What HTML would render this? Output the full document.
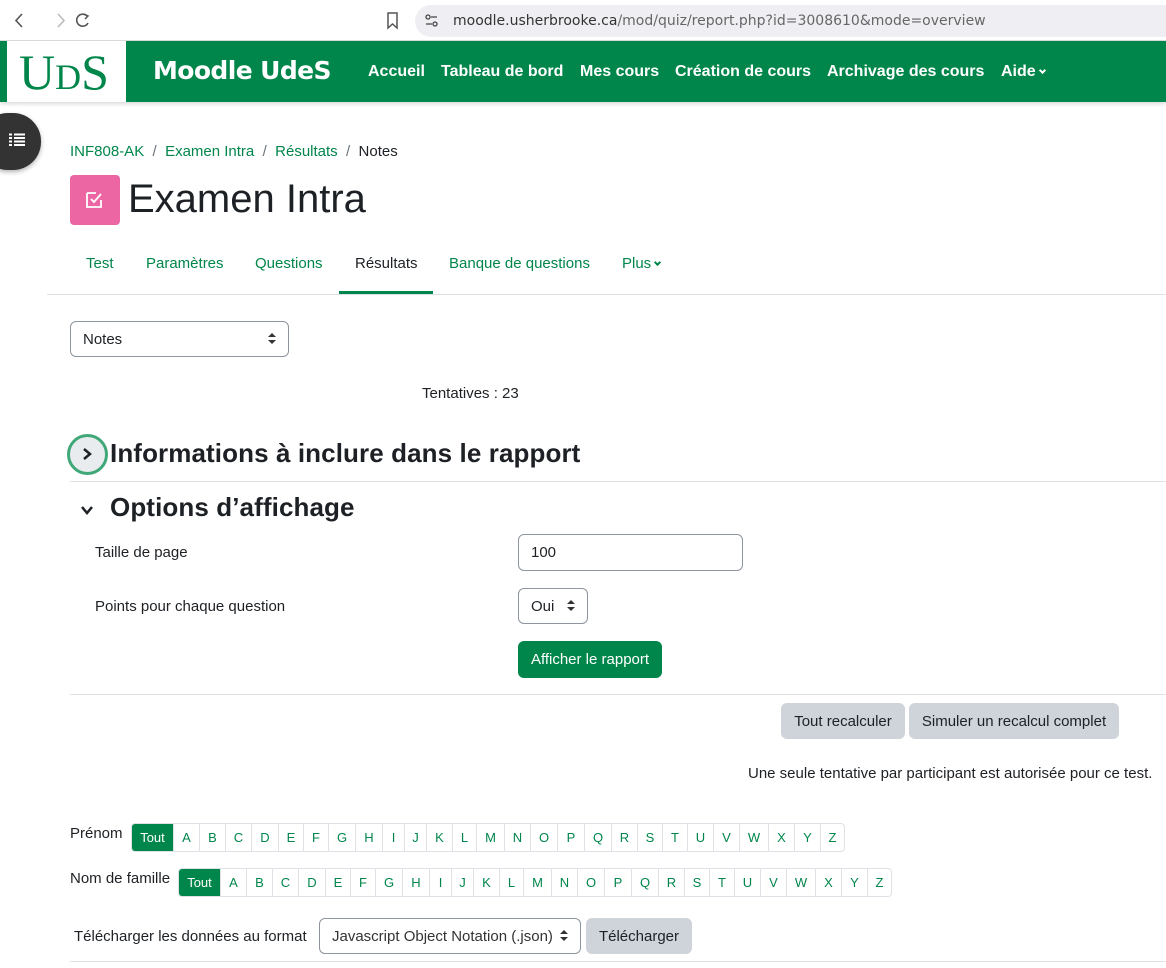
<!DOCTYPE html>
<html><head><meta charset="utf-8"><style>
*{box-sizing:border-box;margin:0;padding:0}
body{width:1166px;height:968px;overflow:hidden;background:#fff;font-family:"Liberation Sans",sans-serif;color:#1d2125;position:relative;font-size:15px}
.a{position:absolute;white-space:nowrap}
.g{color:#00864a}
.nav{position:absolute;left:0;top:41px;width:1166px;height:61px;background:#00864a;box-shadow:0 2px 4px rgba(0,0,0,.15)}
.nav .l{position:absolute;top:22px;color:#fff;font-weight:bold;font-size:16px}
.sel{position:absolute;border:1px solid #8f959e;border-radius:6px;background:#fff;font-size:15px;color:#1d2125;padding-left:12px;display:flex;align-items:center}
.sel:after{content:"";position:absolute;right:12px;top:50%;margin-top:-6px;border-left:4px solid transparent;border-right:4px solid transparent;border-bottom:4px solid #333}
.sel:before{content:"";position:absolute;right:12px;top:50%;margin-top:1px;border-left:4px solid transparent;border-right:4px solid transparent;border-top:4px solid #333}
.n:before,.n:after{display:none}
.btn{position:absolute;border-radius:6px;font-size:15px;display:flex;align-items:center;justify-content:center}
.bar{position:absolute;display:flex;border:1px solid #dee2e6;border-radius:4px;height:29px;font-size:13px}
.bar span{display:flex;align-items:center;justify-content:center;color:#00864a;border-left:1px solid #dee2e6;height:100%}
.bar span.t{background:#00864a;color:#fff;border:none;width:41px;border-radius:3px 0 0 3px}
.hr{position:absolute;height:1px;background:#dee2e6}
.chev{display:inline-block;width:6px;height:6px;border-right:2px solid currentColor;border-bottom:2px solid currentColor;transform:rotate(45deg);margin-left:4px;vertical-align:3px}
</style></head><body>
<div class="a" style="left:0;top:0;width:1166px;height:41px;background:#fff;border-bottom:1px solid #ddd"></div>
<svg class="a" style="left:12px;top:11px" width="80" height="20"><path d="M10 3 L4 9.5 L10 16" stroke="#555" stroke-width="1.6" fill="none"/><path d="M46 3 L52 9.5 L46 16" stroke="#bbb" stroke-width="1.6" fill="none"/><path d="M75 5 A6 6 0 1 0 76 12" stroke="#555" stroke-width="1.6" fill="none"/><path d="M72 3 L76 5 L73 8" stroke="#555" stroke-width="1.5" fill="none"/></svg>
<svg class="a" style="left:385px;top:11px" width="16" height="20"><path d="M3 2 H12 V17 L7.5 13 L3 17 Z" stroke="#555" stroke-width="1.5" fill="none"/></svg>
<div class="a" style="left:415px;top:5px;width:751px;height:32px;background:#efeff3;border-radius:16px 0 0 16px"></div>
<svg class="a" style="left:424px;top:13px" width="16" height="16"><circle cx="4" cy="4" r="2" stroke="#444" fill="none" stroke-width="1.3"/><path d="M7 4H13M2 11H8" stroke="#444" stroke-width="1.3"/><circle cx="11" cy="11" r="2" stroke="#444" fill="none" stroke-width="1.3"/></svg>
<div class="a" style="left:453px;top:13px;color:#333;font-family:'DejaVu Sans',sans-serif;font-size:14px">moodle.usherbrooke.ca<span style="color:#666">/mod/quiz/report.php?id=3008610&amp;mode=overview</span></div>
<div class="nav">
<div class="a" style="left:7px;top:0;width:119px;height:61px;background:#fff"></div>
<div class="a" style="left:19px;top:3px;font-family:'Liberation Serif',serif;font-size:50px;color:#00864a;line-height:56px">U<span style="font-size:36px">D</span>S</div>
<div class="a" style="left:153px;top:15px;color:#fff;font-weight:bold;font-size:25px;font-family:'DejaVu Sans',sans-serif;letter-spacing:-0.6px">Moodle UdeS</div>
<div class="l" style="left:368px">Accueil</div>
<div class="l" style="left:441px">Tableau de bord</div>
<div class="l" style="left:580px">Mes cours</div>
<div class="l" style="left:675px">Création de cours</div>
<div class="l" style="left:827px">Archivage des cours</div>
<div class="l" style="left:1001px">Aide<span class="chev" style="width:5px;height:5px"></span></div>
</div>
<div class="a" style="left:-20px;top:113px;width:61px;height:57px;border-radius:28px;background:#333;box-shadow:0 2px 5px rgba(0,0,0,.3)"></div>
<svg class="a" style="left:9px;top:133px" width="16" height="14"><path d="M0 1.5H3M5 1.5H16M0 5H3M5 5H16M0 8.5H3M5 8.5H16M0 12H3M5 12H16" stroke="#fff" stroke-width="2"/></svg>
<div class="a" style="left:70px;top:143px;font-size:15px"><span class="g">INF808-AK</span> <span style="color:#6a737b">&nbsp;/&nbsp;</span> <span class="g">Examen Intra</span> <span style="color:#6a737b">&nbsp;/&nbsp;</span> <span class="g">Résultats</span> <span style="color:#6a737b">&nbsp;/&nbsp;</span> Notes</div>
<div class="a" style="left:70px;top:175px;width:50px;height:50px;background:#eb66a2;border-radius:4px"></div>
<svg class="a" style="left:84px;top:189px" width="22" height="22"><path d="M3 4H12M3 4V18H17V11" stroke="#fff" stroke-width="1.8" fill="none"/><path d="M7 10L10 13L17 5" stroke="#fff" stroke-width="1.8" fill="none"/></svg>
<div class="a" style="left:128px;top:177px;font-size:40px">Examen Intra</div>
<div class="a" style="left:86px;top:255px;font-size:15px;color:#00864a">Test</div>
<div class="a" style="left:146px;top:255px;font-size:15px;color:#00864a">Paramètres</div>
<div class="a" style="left:255px;top:255px;font-size:15px;color:#00864a">Questions</div>
<div class="a" style="left:355px;top:255px;font-size:15px;color:#1d2125">Résultats</div>
<div class="a" style="left:449px;top:255px;font-size:15px;color:#00864a">Banque de questions</div>
<div class="a" style="left:622px;top:255px;font-size:15px;color:#00864a">Plus<span class="chev" style="width:5px;height:5px"></span></div>
<div class="hr" style="left:47px;top:294px;width:1119px"></div>
<div class="a" style="left:339px;top:291px;width:94px;height:3px;background:#00864a"></div>
<div class="sel" style="left:70px;top:321px;width:219px;height:36px">Notes</div>
<div class="a" style="left:422px;top:385px;font-size:15px">Tentatives : 23</div>
<div class="a" style="left:67px;top:434px;width:41px;height:41px;border-radius:50%;border:3px solid #40a878;background:#e9ecef"></div>
<svg class="a" style="left:80px;top:447px" width="14" height="14"><path d="M4 2L10 7L4 12" stroke="#1d2125" stroke-width="2.5" fill="none"/></svg>
<div class="a" style="left:110px;top:438px;font-size:26px;font-weight:bold;letter-spacing:0.1px">Informations à inclure dans le rapport</div>
<div class="hr" style="left:70px;top:481px;width:1096px"></div>
<svg class="a" style="left:80px;top:503px" width="14" height="14"><path d="M2 4L7 10L12 4" stroke="#1d2125" stroke-width="2.5" fill="none"/></svg>
<div class="a" style="left:110px;top:492px;font-size:26px;font-weight:bold;letter-spacing:0.1px">Options d’affichage</div>
<div class="a" style="left:95px;top:544px">Taille de page</div>
<div class="sel n" style="left:518px;top:534px;width:225px;height:37px">100</div>
<div class="a" style="left:95px;top:598px">Points pour chaque question</div>
<div class="sel" style="left:518px;top:588px;width:70px;height:36px">Oui</div>
<div class="btn" style="left:518px;top:641px;width:144px;height:37px;background:#00864a;color:#fff">Afficher le rapport</div>
<div class="hr" style="left:70px;top:694px;width:1096px"></div>
<div class="btn" style="left:781px;top:703px;width:124px;height:36px;background:#ced4da">Tout recalculer</div>
<div class="btn" style="left:909px;top:703px;width:210px;height:36px;background:#ced4da">Simuler un recalcul complet</div>
<div class="a" style="left:748px;top:765px">Une seule tentative par participant est autorisée pour ce test.</div>
<div class="a" style="left:70px;top:825px">Prénom</div>
<div class="bar" style="left:131px;top:823px"><span class="t">Tout</span><span style="width:26px">A</span><span style="width:26px">B</span><span style="width:26px">C</span><span style="width:27px">D</span><span style="width:25px">E</span><span style="width:25px">F</span><span style="width:27px">G</span><span style="width:27px">H</span><span style="width:22px">I</span><span style="width:22px">J</span><span style="width:26px">K</span><span style="width:24px">L</span><span style="width:28px">M</span><span style="width:26px">N</span><span style="width:27px">O</span><span style="width:27px">P</span><span style="width:27px">Q</span><span style="width:26px">R</span><span style="width:25px">S</span><span style="width:25px">T</span><span style="width:26px">U</span><span style="width:26px">V</span><span style="width:29px">W</span><span style="width:26px">X</span><span style="width:26px">Y</span><span style="width:24px">Z</span></div>
<div class="a" style="left:70px;top:870px">Nom de famille</div>
<div class="bar" style="left:178px;top:868px"><span class="t">Tout</span><span style="width:26px">A</span><span style="width:26px">B</span><span style="width:26px">C</span><span style="width:27px">D</span><span style="width:25px">E</span><span style="width:25px">F</span><span style="width:27px">G</span><span style="width:27px">H</span><span style="width:22px">I</span><span style="width:22px">J</span><span style="width:26px">K</span><span style="width:24px">L</span><span style="width:28px">M</span><span style="width:26px">N</span><span style="width:27px">O</span><span style="width:27px">P</span><span style="width:27px">Q</span><span style="width:26px">R</span><span style="width:25px">S</span><span style="width:25px">T</span><span style="width:26px">U</span><span style="width:26px">V</span><span style="width:29px">W</span><span style="width:26px">X</span><span style="width:26px">Y</span><span style="width:24px">Z</span></div>
<div class="a" style="left:74px;top:928px">Télécharger les données au format</div>
<div class="sel" style="left:319px;top:918px;width:262px;height:36px;color:#333">Javascript Object Notation (.json)</div>
<div class="btn" style="left:586px;top:918px;width:106px;height:36px;background:#ced4da">Télécharger</div>
<div class="hr" style="left:70px;top:961px;width:1096px"></div>
</body></html>
